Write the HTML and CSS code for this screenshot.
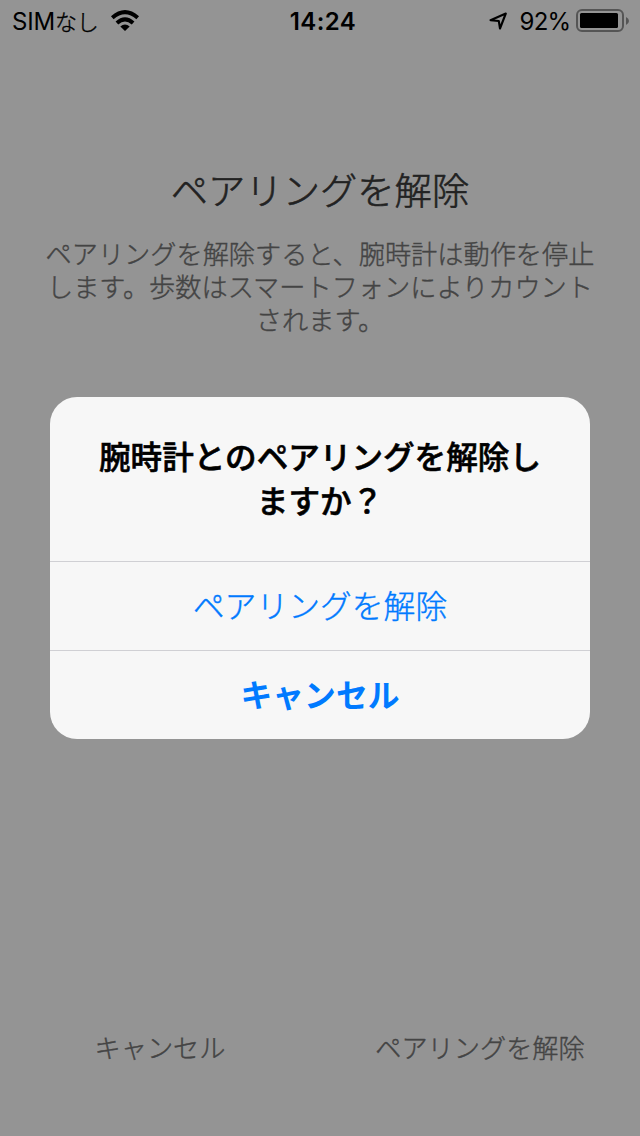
FILE: index.html
```html
<!DOCTYPE html>
<html lang="ja">
<head>
<meta charset="utf-8">
<title>ペアリングを解除</title>
<link rel="stylesheet" href="styles.css">
</head>
<body>
<div class="screen">
  <header class="status">
    <div class="side"><span class="carrier">SIM<span class="kana">なし</span></span>
      <svg class="wifi" width="30" height="22" viewBox="0 0 30 22"><g fill="none" stroke="#000" stroke-width="4"><path d="M2.3 7.7Q15-3.5 27.7 7.7"/><path d="M6.9 13Q15 5.7 23.1 13"/></g><path d="M15 21l-4.7-4.4q4.7-4 9.4 0z"/></svg>
    </div>
    <div class="time">14:24</div>
    <div class="side right">
      <svg class="location" width="20" height="20" viewBox="0 0 20 20"><path d="M17.8 2.5L12 17.5L10.8 10L2.5 9.2Z" fill="none" stroke="#000" stroke-width="2.1" stroke-linejoin="round"/></svg>
      <span class="percent">92%</span>
      <svg class="battery" width="54" height="24" viewBox="0 0 54 24"><rect x="1" y="1" width="46" height="21" rx="5" fill="none" stroke="#555" stroke-width="2"/><rect x="4" y="4" width="38" height="15" rx="1.5"/><path d="M50 8q3 1.5 3 4t-3 4z" fill="#555"/></svg>
    </div>
  </header>
  <main class="page">
    <h1 class="title">ペアリングを解除</h1>
    <p class="description">ペアリングを解除すると、腕時計は動作を停止<br>します。歩数はスマートフォンによりカウント<br>されます。</p>
    <section class="dialog" role="alertdialog">
      <h2 class="question">腕時計とのペアリングを解除し<br>ますか？</h2>
      <button class="action">ペアリングを解除</button>
      <button class="action cancel">キャンセル</button>
    </section>
  </main>
  <footer class="footer"><span>キャンセル</span><span>ペアリングを解除</span></footer>
</div>
</body>
</html>
```

FILE: styles.css
```css
* { box-sizing: border-box; }
body { margin: 0; font-family: Inter, "Noto Sans CJK JP", sans-serif; }
.screen { width: 640px; height: 1136px; background: #949494; display: flex; flex-direction: column; overflow: hidden; }
.status { height: 40px; display: grid; grid-template-columns: 1fr auto 1fr; align-items: center; padding: 0 10px 0 12px; font-size: 24px; line-height: 40px; white-space: nowrap; }
.side { display: flex; align-items: center; gap: 12px; }
.carrier { width: 86px; padding-top: 2px; letter-spacing: -0.2px; }
.kana { font-size: 22px; font-weight: 300; -webkit-text-stroke: 0.35px; }
.right { justify-content: flex-end; }
.time { font-weight: 600; letter-spacing: 0.4px; padding: 2px 0 0 4px; }
.percent { margin-right: -6.5px; padding-top: 2px; font-size: 24px; letter-spacing: -0.7px; }
.page { flex: 1; display: flex; flex-direction: column; align-items: center; font-family: "Noto Sans CJK JP", sans-serif; }
.title { margin: 119px 0 0; height: 60px; font-size: 37.3px; line-height: 60px; font-weight: 300; color: #222; -webkit-text-stroke: 0.6px; }
.description { margin: 18px 0 0; height: 100px; text-align: center; font-size: 26.2px; line-height: 33px; font-weight: 300; color: #444; -webkit-text-stroke: 0.4px; }
.dialog { margin-top: 60px; width: 540px; height: 342px; border-radius: 27px; background: #f7f7f7; overflow: hidden; }
.question { margin: 0; height: 164px; padding-top: 36px; text-align: center; font-size: 31.6px; line-height: 44px; font-weight: 500; -webkit-text-stroke: 0.6px; }
.action { display: block; width: 100%; height: 89px; padding: 0 0 3px; border: 0; border-top: 1px solid #d0d0d4; background: none; color: #007aff; font: 300 31.8px/85px "Noto Sans CJK JP", sans-serif; -webkit-text-stroke: 0.4px; }
.cancel { font-weight: 700; -webkit-text-stroke: 0; }
.footer { height: 176px; padding-top: 67px; display: grid; grid-template-columns: 1fr 1fr; text-align: center; font: 300 26.2px/40px "Noto Sans CJK JP", sans-serif; color: #444; -webkit-text-stroke: 0.4px; }
```
